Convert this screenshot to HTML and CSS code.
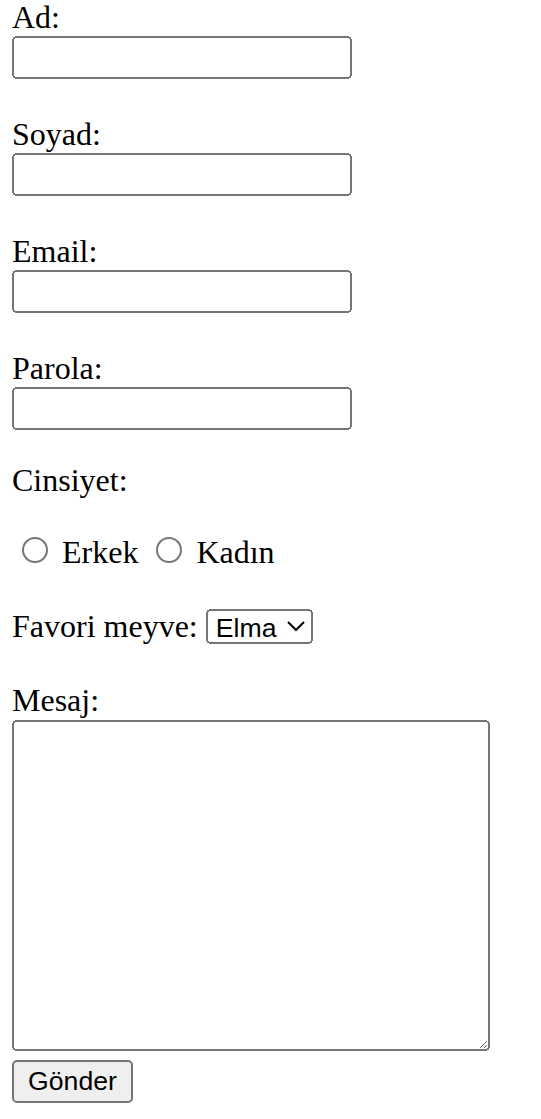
FILE: index.html
```html
<!DOCTYPE html>
<html lang="tr">
<head>
<meta charset="utf-8">
<title>Form</title>
<link rel="stylesheet" href="styles.css">
</head>
<body>
<form class="form">
<label for="ad">Ad:</label><br>
<input class="field" type="text" id="ad" name="ad"><br><br>
<label for="soyad">Soyad:</label><br>
<input class="field" type="text" id="soyad" name="soyad"><br><br>
<label for="email">Email:</label><br>
<input class="field" type="email" id="email" name="email"><br><br>
<label for="parola">Parola:</label><br>
<input class="field" type="password" id="parola" name="parola"><br>
<p class="group-title">Cinsiyet:</p>
<input class="radio" type="radio" name="cinsiyet" id="erkek" value="erkek"> <label for="erkek">Erkek</label> <input class="radio" type="radio" name="cinsiyet" id="kadin" value="kadin"> <label for="kadin">Kadın</label><br><br>
<label for="meyve">Favori meyve:</label> <select class="select" id="meyve" name="meyve"><option>Elma</option><option>Armut</option><option>Muz</option></select><br><br>
<label for="mesaj">Mesaj:</label><br>
<textarea class="message" id="mesaj" name="mesaj"></textarea><br>
<button class="submit" type="submit">Gönder</button>
</form>
</body>
</html>
```

FILE: styles.css
```css
html, body {
  margin: 0;
  padding: 0;
  background: #fff;
}

.form {
  zoom: 2;
  margin: -0.5px 0 0 6px;
  font-family: "Liberation Serif", "Times New Roman", serif;
  font-size: 16px;
  color: #000;
}

.group-title {
  margin: 1em 0;
}

.field {
  width: 170px;
  box-sizing: border-box;
  font: 13.333px "Liberation Sans", Arial, sans-serif;
}

.select {
  width: 53.5px;
  height: 17.5px;
  box-sizing: border-box;
  padding-left: 0;
  font: 13.333px "Liberation Sans", Arial, sans-serif;
}

.message {
  width: 239px;
  height: 165.5px;
  margin-top: 0.5px;
  box-sizing: border-box;
  font: 13.333px "Liberation Mono", "Courier New", monospace;
}

.submit {
  margin-top: 0.5px;
  font: 13.333px "Liberation Sans", Arial, sans-serif;
}
```
